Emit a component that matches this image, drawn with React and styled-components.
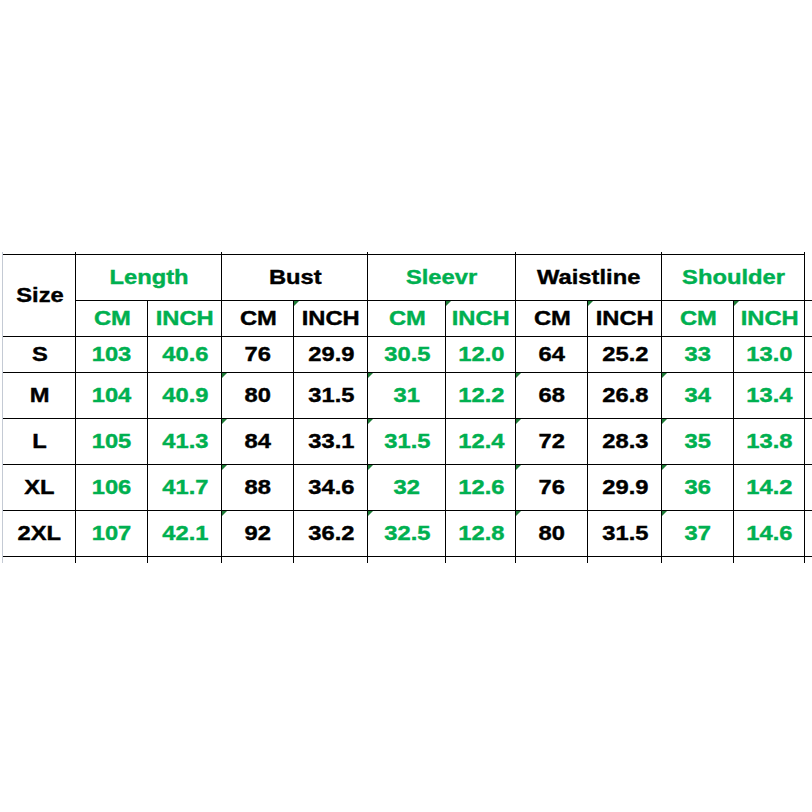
import React from 'react';
import styled, { createGlobalStyle } from 'styled-components';

const GlobalStyle = createGlobalStyle`
  html, body {
    margin: 0;
    padding: 0;
    background: #fff;
    overflow: hidden;
  }
  body {
    font-family: "Liberation Sans", Arial, sans-serif;
  }
`;

const GREEN = '#00b050';

const Page = styled.div`
  width: 812px;
  height: 812px;
  padding-top: 252px;
  padding-left: 2px;
  box-sizing: border-box;
  overflow: hidden;
`;

const Sheet = styled.div`
  border-left: 1px solid #c4cad4;
  width: max-content;
`;

const Table = styled.table`
  border-collapse: collapse;
  table-layout: fixed;
  width: 841px;
`;

const StubCell = styled.td`
  height: ${(p) => p.$h}px;
  padding: 0;
  border-right: ${(p) => (p.$edge ? 'none' : '1px solid #000')};
  border-left: none;
`;

const Cell = styled.td`
  position: relative;
  height: ${(p) => p.$h || 45}px;
  padding: 0;
  text-align: center;
  vertical-align: middle;
  border: 1px solid #000;
  border-left: ${(p) => (p.$first ? 'none' : '1px solid #000')};
  color: ${(p) => (p.$green ? GREEN : '#000')};
  font-weight: 700;
  font-size: 21px;
  line-height: 1;
  -webkit-text-stroke: 0.4px currentColor;

  &::before {
    content: '';
    display: ${(p) => (p.$flag ? 'block' : 'none')};
    position: absolute;
    top: 0;
    left: 0;
    border-top: 5px solid #1d7a36;
    border-right: 5px solid transparent;
  }
`;

const Filler = styled.td`
  padding: 0;
  border-bottom: 1px solid #000;
  border-top: none;
  border-right: none;
`;

const Label = styled.span`
  display: inline-block;
  transform: translate(1px, -1px) scaleX(1.13);
  white-space: nowrap;
`;

const widths = [72, 72, 74, 72, 74, 78, 70, 72, 74, 72, 71, 40];

const groups = [
  { name: 'Length', green: true },
  { name: 'Bust', green: false },
  { name: 'Sleevr', green: true },
  { name: 'Waistline', green: false },
  { name: 'Shoulder', green: true },
];

const rows = [
  ['S', '103', '40.6', '76', '29.9', '30.5', '12.0', '64', '25.2', '33', '13.0'],
  ['M', '104', '40.9', '80', '31.5', '31', '12.2', '68', '26.8', '34', '13.4'],
  ['L', '105', '41.3', '84', '33.1', '31.5', '12.4', '72', '28.3', '35', '13.8'],
  ['XL', '106', '41.7', '88', '34.6', '32', '12.6', '76', '29.9', '36', '14.2'],
  ['2XL', '107', '42.1', '92', '36.2', '32.5', '12.8', '80', '31.5', '37', '14.6'],
];

const App = () => (
  <Page>
    <GlobalStyle />
    <Sheet>
      <Table>
        <colgroup>
          {widths.map((w, i) => (
            <col key={i} style={{ width: `${w}px` }} />
          ))}
        </colgroup>
        <tbody>
          <tr>
            <StubCell $h={2} />
            {groups.map((g) => (
              <StubCell key={g.name} $h={2} colSpan={2} />
            ))}
            <StubCell $h={2} $edge />
          </tr>
          <tr>
            <Cell rowSpan={2} $first $h={45}>
              <Label>Size</Label>
            </Cell>
            {groups.map((g) => (
              <Cell key={g.name} colSpan={2} $green={g.green} $h={45}>
                <Label>{g.name}</Label>
              </Cell>
            ))}
            <Filler />
          </tr>
          <tr>
            {groups.map((g, gi) => (
              <React.Fragment key={g.name}>
                <Cell $green={g.green} $h={35}>
                  <Label>CM</Label>
                </Cell>
                <Cell $green={g.green} $h={35} $flag={gi > 0}>
                  <Label>INCH</Label>
                </Cell>
              </React.Fragment>
            ))}
            <Filler />
          </tr>
          {rows.map((r, ri) => (
            <tr key={r[0]}>
              <Cell $first $h={ri === 0 ? 35 : 45}>
                <Label>{r[0]}</Label>
              </Cell>
              {r.slice(1).map((v, i) => {
                const gi = Math.floor(i / 2);
                return (
                  <Cell
                    key={i}
                    $green={groups[gi].green}
                    $h={ri === 0 ? 35 : 45}
                    $flag={ri > 0 && gi > 0 && i % 2 === 0}
                  >
                    <Label>{v}</Label>
                  </Cell>
                );
              })}
              <Filler />
            </tr>
          ))}
          <tr>
            {widths.map((w, i) => (
              <StubCell key={i} $h={6} $edge={i === widths.length - 1} />
            ))}
          </tr>
        </tbody>
      </Table>
    </Sheet>
  </Page>
);

export default App;
